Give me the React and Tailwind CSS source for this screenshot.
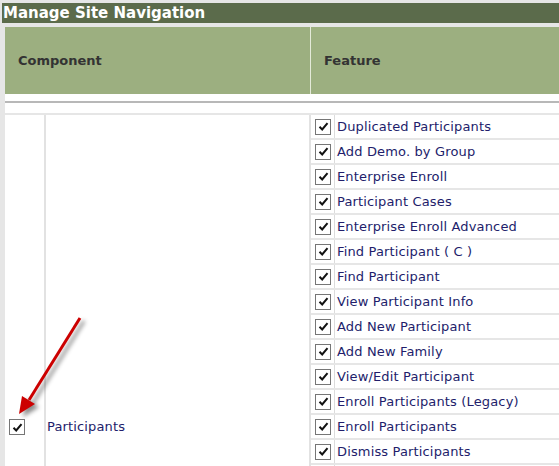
import React from 'react';

const features = [
  'Duplicated Participants',
  'Add Demo. by Group',
  'Enterprise Enroll',
  'Participant Cases',
  'Enterprise Enroll Advanced',
  'Find Participant ( C )',
  'Find Participant',
  'View Participant Info',
  'Add New Participant',
  'Add New Family',
  'View/Edit Participant',
  'Enroll Participants (Legacy)',
  'Enroll Participants',
  'Dismiss Participants',
];

const CheckBox = () => (
  <span className="flex h-[16px] w-[16px] items-center justify-center border border-[#767676] bg-white">
    <svg width="11" height="11" viewBox="0 0 11 11">
      <path d="M1.5 5.8 L4.2 8.5 L9.5 2.2" fill="none" stroke="#111" strokeWidth="2" />
    </svg>
  </span>
);

const FeatureRow = ({ label }) => (
  <div className="flex h-[25px] border-b-2 border-[#e6e6e6]">
    <div className="flex w-[24px] items-center justify-center border-r border-[#dcdcdc] pl-[1px]">
      {label && <CheckBox />}
    </div>
    <div className="flex items-center pl-[2px] text-[13px] tracking-[0.15px] text-[#221d6b] whitespace-nowrap">{label}</div>
  </div>
);

const App = () => {
  return (
    <div className="relative h-[466px] w-[559px] overflow-hidden bg-[#e6e6e6] font-['DejaVu_Sans',sans-serif]">
      <div className="pt-[3px]">
        <div className="ml-[2px] h-[20px] bg-[#5b6b4b] pl-[1px] text-[15px] font-bold leading-[20px] text-white">
          Manage Site Navigation
        </div>
      </div>

      <div className="ml-[5px] mt-[4px] w-[600px] bg-white">
        {/* column headers */}
        <div className="flex h-[67px] bg-[#9caf80] text-[13px] font-bold text-[#333]">
          <div className="flex w-[306px] items-center border-r border-[#e4ead9] pl-[13px] pt-[1px]">Component</div>
          <div className="flex items-center pl-[13px] pt-[1px]">Feature</div>
        </div>
        <div className="h-[7px]" />
        <div className="h-[14px] border-t-2 border-b-2 border-t-[#b8b8b8] border-b-[#e6e6e6]" />

        {/* component row */}
        <div className="flex h-[624px]">
          <div className="flex w-[41px] items-center border-r-2 border-[#e2e2e2] pl-[4px]">
            <CheckBox />
          </div>
          <div className="flex w-[265px] items-center border-r-2 border-[#e2e2e2] pl-[1px] text-[13px] tracking-[0.15px] text-[#221d6b]">
            Participants
          </div>
          <div className="flex-1">
            {features.map((f) => (
              <FeatureRow key={f} label={f} />
            ))}
            <FeatureRow label="" />
          </div>
        </div>
      </div>

      {/* callout arrow */}
      <svg
        className="pointer-events-none absolute left-0 top-0 drop-shadow-[4px_3px_2px_rgba(0,0,0,0.45)]"
        width="120"
        height="466"
        viewBox="0 0 120 466"
      >
        <line x1="80" y1="318" x2="29" y2="400" stroke="#cc0000" strokeWidth="3" />
        <polygon points="19,414 35,404 22,396" fill="#cc0000" />
      </svg>
    </div>
  );
};

export default App;
